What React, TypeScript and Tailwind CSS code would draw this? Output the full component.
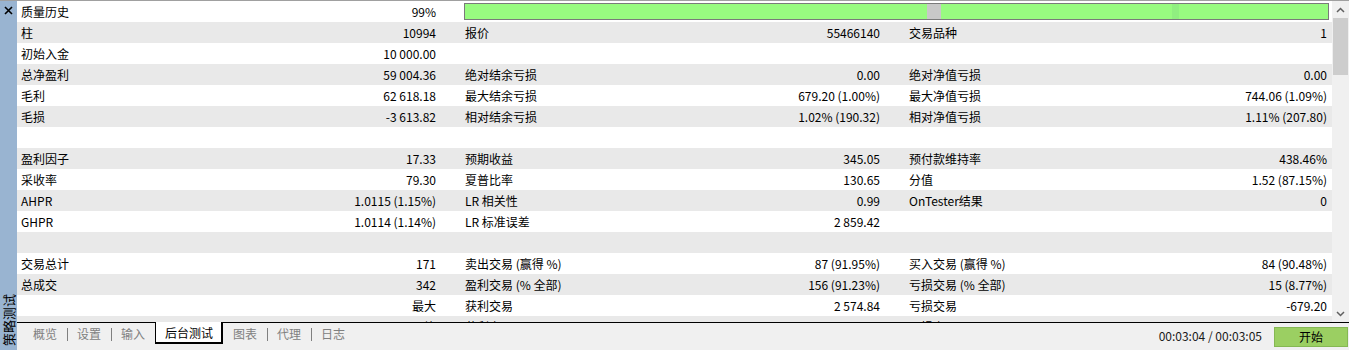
import React from "react";

type Cell = [string, string];
type Row = { c1: Cell; c2?: Cell; c3?: Cell; bar?: boolean };

const rows: Row[] = [
  { c1: ["质量历史", "99%"], bar: true },
  { c1: ["柱", "10994"], c2: ["报价", "55466140"], c3: ["交易品种", "1"] },
  { c1: ["初始入金", "10 000.00"] },
  { c1: ["总净盈利", "59 004.36"], c2: ["绝对结余亏损", "0.00"], c3: ["绝对净值亏损", "0.00"] },
  { c1: ["毛利", "62 618.18"], c2: ["最大结余亏损", "679.20 (1.00%)"], c3: ["最大净值亏损", "744.06 (1.09%)"] },
  { c1: ["毛损", "-3 613.82"], c2: ["相对结余亏损", "1.02% (190.32)"], c3: ["相对净值亏损", "1.11% (207.80)"] },
  { c1: ["", ""] },
  { c1: ["盈利因子", "17.33"], c2: ["预期收益", "345.05"], c3: ["预付款维持率", "438.46%"] },
  { c1: ["采收率", "79.30"], c2: ["夏普比率", "130.65"], c3: ["分值", "1.52 (87.15%)"] },
  { c1: ["AHPR", "1.0115 (1.15%)"], c2: ["LR 相关性", "0.99"], c3: ["OnTester结果", "0"] },
  { c1: ["GHPR", "1.0114 (1.14%)"], c2: ["LR 标准误差", "2 859.42"] },
  { c1: ["", ""] },
  { c1: ["交易总计", "171"], c2: ["卖出交易 (赢得 %)", "87 (91.95%)"], c3: ["买入交易 (赢得 %)", "84 (90.48%)"] },
  { c1: ["总成交", "342"], c2: ["盈利交易 (% 全部)", "156 (91.23%)"], c3: ["亏损交易 (% 全部)", "15 (8.77%)"] },
  { c1: ["", "最大"], c2: ["获利交易", "2 574.84"], c3: ["亏损交易", "-679.20"] },
  { c1: ["", "平均"], c2: ["获利交易", "491.48"], c3: ["亏损交易", "-243.92"] },
];

function CellView({ cell, last }: { cell?: Cell; last?: boolean }) {
  return (
    <div className={`flex justify-between items-center pl-[4px] whitespace-nowrap ${last ? "pr-[5px]" : "pr-[25px]"}`}>
      <span>{cell ? cell[0] : ""}</span>
      <span>{cell ? cell[1] : ""}</span>
    </div>
  );
}

function ProgressBar() {
  return (
    <div className="col-span-2 flex items-center h-[21px] pl-[3px] pr-[3px]">
      <div className="flex w-full h-[17px] border border-[#7a7a7a] bg-[#98fb80]">
        <div className="w-[462px] bg-[#98fb80]" />
        <div className="w-[14px] bg-[#c8c8c8]" />
        <div className="w-[231px] bg-[#98fb80]" />
        <div className="w-[7px] bg-[#90ef80]" />
        <div className="flex-1 bg-[#98fb80]" />
      </div>
    </div>
  );
}

const tabs = ["概览", "设置", "输入", "后台测试", "图表", "代理", "日志"];

export default function App() {
  return (
    <div className="w-[1349px] h-[350px] overflow-hidden flex border-t border-[#a0a0a0] bg-white text-black text-[12px] font-['Segoe_UI','Noto_Sans_CJK_SC',sans-serif]">
      {/* left strip */}
      <div className="w-[17px] shrink-0 bg-[#99b4d1] flex flex-col justify-between items-center">
        <svg width="9" height="9" viewBox="0 0 9 9" className="mt-[5px]">
          <path d="M1 1 L8 8 M8 1 L1 8" stroke="#000" strokeWidth="1.6" />
        </svg>
        <div className="[writing-mode:vertical-rl] [text-orientation:sideways] rotate-180 text-[13px] leading-[16px] mb-[4px] text-black whitespace-nowrap">
          策略测试
        </div>
      </div>
      {/* main */}
      <div className="flex-1 flex flex-col">
        <div className="h-[322px] flex overflow-hidden">
          <div className="w-[1315px] overflow-hidden">
            {rows.map((r, i) => (
              <div
                key={i}
                className={`grid grid-cols-[444px_444px_427px] h-[21px] leading-[21px] ${i % 2 === 1 ? "bg-[#e9e9e9]" : "bg-white"}`}
              >
                <CellView cell={r.c1} />
                {r.bar ? (
                  <ProgressBar />
                ) : (
                  <>
                    <CellView cell={r.c2} />
                    <CellView cell={r.c3} last />
                  </>
                )}
              </div>
            ))}
          </div>
          {/* scrollbar */}
          <div className="w-[17px] bg-[#f0f0f0] flex flex-col">
            <div className="h-[17px] flex items-center justify-center">
              <svg width="9" height="6" viewBox="0 0 9 6">
                <path d="M1 5 L4.5 1.5 L8 5" stroke="#606060" strokeWidth="1.5" fill="none" />
              </svg>
            </div>
            <div className="h-[57px] mx-[1px] bg-[#cdcdcd]" />
            <div className="flex-1" />
            <div className="h-[17px] flex items-center justify-center">
              <svg width="9" height="6" viewBox="0 0 9 6">
                <path d="M1 1 L4.5 4.5 L8 1" stroke="#606060" strokeWidth="1.5" fill="none" />
              </svg>
            </div>
          </div>
        </div>
        {/* tab bar */}
        <div className="h-[28px] border-t border-black bg-[#f0f0f0] flex items-start justify-between">
          <div className="flex items-start pl-[7px]">
            {tabs.map((t, i) => {
              const active = t === "后台测试";
              const prevActive = i > 0 && tabs[i - 1] === "后台测试";
              return (
                <React.Fragment key={t}>
                  {i > 0 && !active && !prevActive && (
                    <div className="w-px h-[13px] bg-[#808080] mt-[5px]" />
                  )}
                  {active ? (
                    <div className="h-[22px] pl-[9px] pr-[8px] -mt-px bg-white border-l border-r-2 border-b-2 border-black leading-[21px] text-black">
                      {t}
                    </div>
                  ) : (
                    <div
                      className={`h-[21px] ${prevActive ? "pl-[10px]" : "pl-[9px]"} pr-[10px] leading-[21px] text-[#808080]`}
                    >
                      {t}
                    </div>
                  )}
                </React.Fragment>
              );
            })}
          </div>
          <div className="flex items-center h-[26px] pr-[1px]">
            <span className="mr-[12px] text-[#1a1a1a]">00:03:04 / 00:03:05</span>
            <div className="w-[74px] h-[20px] mt-[1px] bg-[#9bcf62] border border-[#85b853] flex items-center justify-center text-black">
              开始
            </div>
          </div>
        </div>
      </div>
    </div>
  );
}
